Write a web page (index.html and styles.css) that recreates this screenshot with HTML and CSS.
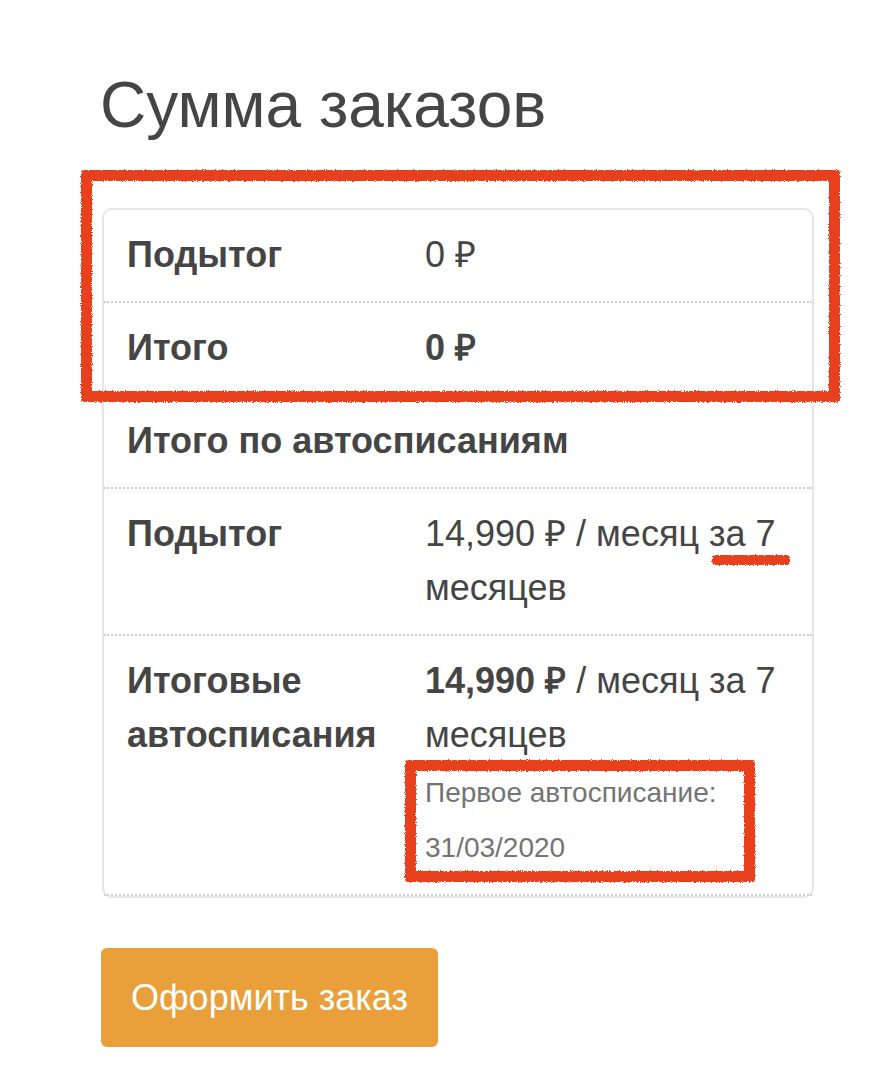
FILE: index.html
```html
<!DOCTYPE html>
<html lang="ru">
<head>
<meta charset="utf-8">
<title>Сумма заказов</title>
<link rel="stylesheet" href="styles.css">
</head>
<body>
<svg class="defs" width="0" height="0" aria-hidden="true">
  <filter id="rough" x="-5%" y="-5%" width="110%" height="110%">
    <feTurbulence type="fractalNoise" baseFrequency="0.9" numOctaves="2" seed="3" result="noise"/>
    <feDisplacementMap in="SourceGraphic" in2="noise" scale="4" xChannelSelector="R" yChannelSelector="G"/>
  </filter>
</svg>
<div class="page">
  <h2 class="title">Сумма заказов</h2>
  <div class="totals">
    <div class="row">
      <div class="th">Подытог</div>
      <div class="td">0&nbsp;₽</div>
    </div>
    <div class="row">
      <div class="th">Итого</div>
      <div class="td"><strong>0&nbsp;₽</strong></div>
    </div>
    <div class="row">
      <div class="th full">Итого по автосписаниям</div>
    </div>
    <div class="row">
      <div class="th">Подытог</div>
      <div class="td">14,990&nbsp;₽ / месяц за 7 месяцев</div>
    </div>
    <div class="row last">
      <div class="th">Итоговые автосписания</div>
      <div class="td"><strong>14,990&nbsp;₽</strong> / месяц за 7 месяцев
        <div class="first-payment">Первое автосписание: 31/03/2020</div>
      </div>
    </div>
  </div>
  <div class="actions">
    <a class="checkout" href="#">Оформить заказ</a>
  </div>
</div>
<div class="mark mark-top"></div>
<div class="mark mark-date"></div>
<div class="mark-line"></div>
</body>
</html>
```

FILE: styles.css
```css
html, body {
  margin: 0;
  padding: 0;
  background: #fff;
}
body {
  font-family: "Liberation Sans", Arial, sans-serif;
  color: #454545;
  position: relative;
  min-height: 1084px;
}
.defs {
  position: absolute;
  width: 0;
  height: 0;
}
.page {
  padding: 68px 70px 0 100px;
}
.title {
  margin: 0 0 66px 0;
  font-size: 64px;
  font-weight: normal;
  line-height: 74px;
  color: #454545;
}
.totals {
  width: 712px;
  margin-left: 2px;
  box-sizing: border-box;
  border: 2px solid #e6e6e6;
  border-radius: 10px;
  font-size: 36px;
  line-height: 54px;
}
.row {
  display: grid;
  grid-template-columns: 298px 1fr;
  border-bottom: 2px dotted #cfcfcf;
}
.th {
  font-weight: bold;
  padding: 18px 22px 19px 23px;
}
.th.full {
  grid-column: 1 / span 2;
}
.td {
  padding: 18px 22px 19px 23px;
}
.td strong {
  font-weight: bold;
}
.first-payment {
  font-size: 28px;
  line-height: 55px;
  color: #747474;
  margin-top: 3px;
  width: 310px;
}
.actions {
  margin-top: 50px;
}
.checkout {
  display: inline-block;
  background: #e9a03b;
  color: #fff;
  text-decoration: none;
  font-size: 36px;
  line-height: 99px;
  padding: 0 30px;
  border-radius: 6px;
  margin-left: 1px;
}
.mark {
  position: absolute;
  border: 11px solid #e8401f;
  box-sizing: border-box;
  border-radius: 3px;
  filter: url(#rough);
}
.mark-top {
  left: 81px;
  top: 170px;
  width: 759px;
  height: 232px;
}
.mark-date {
  left: 405px;
  top: 760px;
  width: 350px;
  height: 122px;
}
.mark-line {
  position: absolute;
  left: 712px;
  top: 555px;
  width: 78px;
  height: 10px;
  background: #e8401f;
  border-radius: 4px;
  filter: url(#rough);
}
```
